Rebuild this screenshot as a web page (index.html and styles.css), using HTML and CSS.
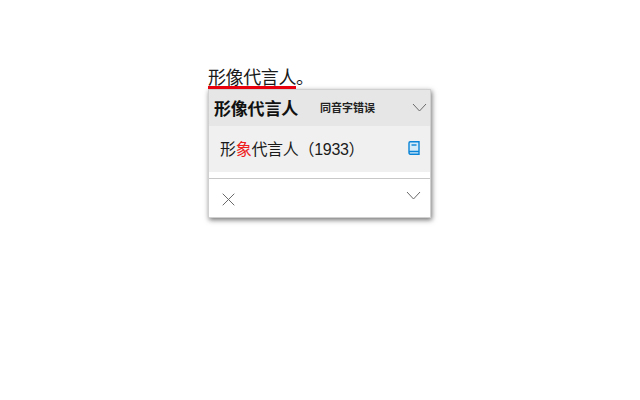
FILE: index.html
```html
<!DOCTYPE html>
<html lang="zh-CN">
<head>
    <meta charset="UTF-8">
    <title>形像代言人</title>
    <link rel="stylesheet" href="styles.css">
</head>
<body>
    <div class="editor">
        <div class="line"><span class="wrong">形像代言人</span>。</div>
        <div class="popup">
            <div class="popup-head">
                <span class="word">形像代言人</span>
                <span class="kind">同音字错误</span>
                <svg class="chevron" width="15" height="9" viewBox="0 0 15 9"><path d="M1 1l6.500 7 6.500-7" /></svg>
            </div>
            <div class="popup-row">
                <span class="suggestion">形<span class="hit">象</span>代言人（1933）</span>
                <svg class="book" width="12" height="14" viewBox="0 0 12 14">
                    <path d="M1 11.500V2C1 1.300 1.500 .8 2.200 .8H11v12.400H2.200C1.500 13.200 1 12.600 1 11.800s.5-1.300 1.200-1.300H11" />
                    <path d="M3.500 4h5" />
                </svg>
            </div>
            <div class="popup-foot">
                <svg class="close" width="13" height="13" viewBox="0 0 13 13"><path d="M.7.7l11.600 11.600M12.300.7L.7 12.300" /></svg>
                <svg class="chevron" width="15" height="9" viewBox="0 0 15 9"><path d="M1 1l6.500 7 6.500-7" /></svg>
            </div>
        </div>
    </div>
</body>
</html>
```
FILE: styles.css
```css
html, body {
    margin: 0;
    padding: 0;
    min-height: 400px;
    background-color: #ffffff;
}
body {
    font-family: "Liberation Sans", "Noto Sans CJK SC", sans-serif;
    color: #1a1a1a;
}
.editor {
    width: 224px;
    padding: 67px 0 0 208px;
}
.line {
    font-size: 18px;
    line-height: 22px;
    white-space: nowrap;
}
.wrong {
    display: inline-block;
    width: 88px;
    height: 19px;
    letter-spacing: -0.4px;
    border-bottom: 3px solid #e8000d;
    vertical-align: top;
}
.popup {
    box-sizing: border-box;
    width: 223px;
    height: 129px;
    background-color: #ffffff;
    border: 1px solid #d0d0d0;
    box-shadow: 1px 2px 5px rgba(0, 0, 0, 0.55);
}
.popup-head {
    display: flex;
    align-items: center;
    height: 36px;
    padding: 0 3px 2px 5px;
    box-sizing: border-box;
    background-color: #e6e6e6;
}
.word {
    width: 106px;
    font-size: 17px;
    letter-spacing: -0.2px;
    font-weight: bold;
    color: #111111;
    white-space: nowrap;
}
.kind {
    font-size: 11px;
    font-weight: bold;
    color: #222222;
    white-space: nowrap;
}
.popup-head .chevron {
    margin-left: auto;
}
.popup-row {
    display: flex;
    align-items: center;
    justify-content: space-between;
    box-sizing: border-box;
    height: 46px;
    padding: 0 10px 3px 11px;
    background-color: #f0f0f0;
    font-size: 16px;
}
.suggestion {
    letter-spacing: -0.3px;
    white-space: nowrap;
    color: #1a1a1a;
}
.hit {
    color: #ee2020;
}
.popup-foot {
    display: flex;
    align-items: center;
    justify-content: space-between;
    height: 38px;
    margin-top: 6px;
    padding: 0 9px 0 13px;
    border-top: 1px solid #c8c8c8;
}
.chevron path, .close path {
    fill: none;
    stroke: #6a6a6a;
    stroke-width: 1;
}
.close {
    margin-top: 2px;
}
.popup-foot .chevron {
    margin-top: -5px;
}
.book path {
    fill: #d5ebf8;
    stroke: #0a84d6;
    stroke-width: 1.4;
}
```
